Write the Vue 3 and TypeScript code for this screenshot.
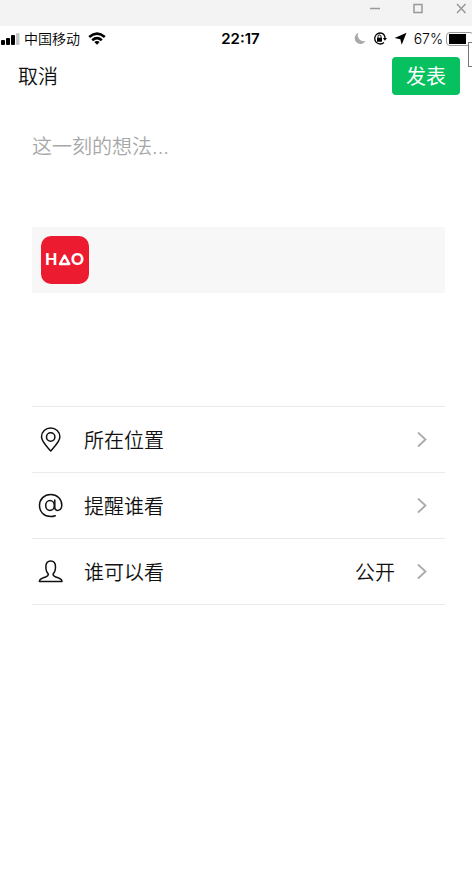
<script setup lang="ts">
import { ref } from 'vue'

interface Option {
  id: 'location' | 'mention' | 'visibility'
  label: string
  value?: string
}

const thought = ref('')
const options: Option[] = [
  { id: 'location', label: '所在位置' },
  { id: 'mention', label: '提醒谁看' },
  { id: 'visibility', label: '谁可以看', value: '公开' },
]
</script>

<template>
  <div class="window">
    <header class="titlebar">
      <button type="button" class="win-btn" aria-label="最小化">
        <svg width="12" height="12" viewBox="0 0 12 12"><path d="M1 6.500h10" /></svg>
      </button>
      <button type="button" class="win-btn" aria-label="最大化">
        <svg width="12" height="12" viewBox="0 0 12 12"><path d="M2 2.500h8v8h-8z" /></svg>
      </button>
      <button type="button" class="win-btn" aria-label="关闭">
        <svg width="12" height="12" viewBox="0 0 12 12"><path d="M2 2l8.500 9M10.500 2l-8.500 9" /></svg>
      </button>
    </header>

    <div class="status">
      <div class="status-left">
        <svg width="20" height="14" viewBox="0 0 20 14">
          <rect x="1" y="8" width="4" height="5" rx="1" />
          <rect x="6" y="6" width="4" height="7" rx="1" />
          <rect x="11" y="3" width="4" height="10" rx="1" />
          <rect x="16" y="1" width="3.500" height="12" rx="1" fill="#c6c6c6" />
        </svg>
        <span class="carrier">中国移动</span>
        <svg class="wifi" width="18" height="14" viewBox="0 0 18 14" fill="none" stroke="#000" stroke-width="2.600">
          <path d="M1.200 4.900Q9-1.800 16.800 4.900M4.200 8.200Q9 4 13.800 8.200" />
          <path d="M6.300 10.100Q9 7.900 11.700 10.100L9 12.700z" fill="#000" stroke="none" />
        </svg>
      </div>
      <time class="clock">22:17</time>
      <div class="status-right">
        <svg width="12" height="14" viewBox="0 0 12 14">
          <path d="M4.300 .8A5.800 5.800 0 1 0 11.600 8.900A6 6 0 0 1 4.300 .8z" fill="#a9a9a9" />
        </svg>
        <svg width="14" height="14" viewBox="0 0 14 14">
          <path d="M11 2.500A5.500 5.500 0 1 0 11 10.500M8.500 1.200A5.500 5.500 0 0 1 12 6.500" fill="none" stroke="#000" stroke-width="1.300" />
          <path d="M9.800 6h4.200l-2.100 2.700z" />
          <rect x="4" y="5.800" width="5" height="4" rx=".5" />
          <path d="M5 6V4.500a1.500 1.500 0 0 1 3 0v1.500" fill="none" stroke="#000" />
        </svg>
        <svg width="13" height="14" viewBox="0 0 13 14">
          <path d="M12.500 .8L7.700 12.800 6.300 7.300.6 6z" />
        </svg>
        <span class="percent">67%</span>
        <span class="battery"><span class="charge"></span></span>
      </div>
      <span class="tip"></span>
    </div>

    <nav class="actions">
      <button type="button" class="cancel">取消</button>
      <button type="button" class="publish">发表</button>
    </nav>

    <main class="compose">
      <textarea v-model="thought" class="thought" placeholder="这一刻的想法..." aria-label="这一刻的想法"></textarea>

      <div class="share">
        <svg class="logo" width="48" height="48" viewBox="0 0 48 48" role="img" aria-label="HAO">
          <rect width="48" height="48" rx="10" fill="#ed1b2f" />
          <text x="4" y="29">H</text>
          <path d="M23.600 19.500L28.200 28H19z" fill="none" stroke="#fff" stroke-width="2.500" stroke-linejoin="round" />
          <text x="30" y="29">O</text>
        </svg>
      </div>

      <ul class="options">
        <li v-for="option in options" :key="option.id">
          <button type="button" class="option">
            <svg class="glyph" width="26" height="26" viewBox="0 0 26 26">
              <template v-if="option.id === 'location'">
                <path d="M12.700 24C10 20.500 3.500 15 3.500 9.800a9.200 8.900 0 0 1 18.400 0C21.900 15 15.400 20.500 12.700 24z" />
                <circle cx="12.700" cy="10" r="4.200" />
              </template>
              <template v-else-if="option.id === 'mention'">
                <ellipse cx="12" cy="12.500" rx="4.300" ry="5" />
                <path d="M16.800 7V14.500C16.800 19 23.800 18.500 23.800 12C23.800 5.800 19 1.500 12.700 1.500C6.200 1.500 1.500 6.200 1.500 12.600S6.200 23.500 12.700 23.500C14.600 23.500 16 23.200 17.300 22.700" />
              </template>
              <template v-else>
                <path d="M10.200 14.800C8.500 13.300 7.900 10.800 7.900 7.800C7.900 4.500 9.700 2 12.700 2S17.500 4.500 17.500 7.800C17.500 10.800 16.900 13.300 15.200 14.800C14.700 16.800 15.700 17.300 17.700 18C21.200 19.200 24 19.400 24 22.600H1.400C1.400 19.400 4.200 19.200 7.700 18C9.700 17.300 10.700 16.800 10.200 14.800z" />
              </template>
            </svg>
            <span class="label">{{ option.label }}</span>
            <span v-if="option.value" class="value">{{ option.value }}</span>
            <svg class="chevron" width="10" height="16" viewBox="0 0 10 16"><path d="M1 .5l7.500 7L1 14.500" /></svg>
          </button>
        </li>
      </ul>
    </main>
  </div>
</template>

<style>
body {
  margin: 0;
  background: #fff;
}
</style>

<style scoped>
.window {
  min-height: 100vh;
  overflow: hidden;
  background: #fff;
  color: #111;
  font-family: Inter, "Noto Sans CJK SC", sans-serif;
  font-weight: 350;
}

button {
  margin: 0;
  padding: 0;
  border: 0;
  background: none;
  color: inherit;
  font: inherit;
}

svg {
  display: block;
  flex: none;
}

.titlebar {
  display: flex;
  justify-content: flex-end;
  align-items: flex-start;
  gap: 31px;
  height: 24px;
  padding: 2px 5px 0 0;
  background: #f3f3f3;
}

.win-btn svg {
  fill: none;
  stroke: #999;
  stroke-width: 1.5;
}

.status {
  position: relative;
  display: grid;
  grid-template-columns: 1fr auto 1fr;
  align-items: center;
  height: 25px;
  color: #000;
  font-size: 14px;
  line-height: 20px;
}

.status-left,
.status-right {
  display: flex;
  align-items: center;
}

.carrier {
  margin-left: 4px;
}

.wifi {
  margin-left: 8px;
}

.clock {
  padding-left: 9px;
  font-size: 15px;
  font-weight: 600;
}

.status-right {
  justify-content: flex-end;
  gap: 7px;
}

.percent {
  margin-right: -4px;
}

.battery {
  flex: none;
  box-sizing: border-box;
  width: 28px;
  height: 14px;
  margin-right: -2px;
  padding: 1px;
  border: 1px solid #999;
  border-radius: 4px;
}

.charge {
  display: block;
  width: 17px;
  height: 10px;
  margin-left: 1px;
  background: #000;
}

.tip {
  position: absolute;
  top: 16px;
  right: -8px;
  width: 10px;
  height: 23px;
  border: 1px solid #777;
  background: #fff;
}

.actions {
  display: flex;
  justify-content: space-between;
  align-items: center;
  height: 50px;
  padding: 0 12px 0 18px;
  font-size: 20px;
  line-height: 30px;
}

.cancel {
  padding-top: 2px;
}

.publish {
  width: 68px;
  height: 38px;
  padding-top: 1px;
  border-radius: 4px;
  background: #07c160;
  color: #fff;
  font-weight: 400;
}

.compose {
  padding: 30px 27px 0 32px;
}

.thought {
  display: block;
  box-sizing: border-box;
  width: 100%;
  height: 96px;
  padding: 1px 0 0;
  border: 0;
  outline: 0;
  resize: none;
  background: none;
  color: #111;
  font: inherit;
  font-size: 20px;
  line-height: 30px;
}

.thought::placeholder {
  color: #a8a8a8;
  opacity: 1;
}

.share {
  padding: 9px;
  background: #f7f7f7;
}

.logo text {
  fill: #fff;
  font-family: Lato, sans-serif;
  font-size: 16px;
  font-weight: 900;
}

.options {
  margin: 113px 0 0;
  padding: 0;
  border-top: 1px solid #ebebeb;
  list-style: none;
}

.options li {
  border-bottom: 1px solid #ebebeb;
}

.option {
  display: flex;
  align-items: center;
  width: 100%;
  height: 65px;
  padding: 0 18px 0 6px;
  font-size: 20px;
  line-height: 30px;
  text-align: left;
}

.glyph {
  margin-right: 20px;
  fill: none;
  stroke: #111;
  stroke-width: 1.5;
  stroke-linejoin: round;
  stroke-linecap: round;
}

.label,
.value {
  padding-top: 2px;
}

.label {
  flex: 1;
}

.value {
  margin-right: 22px;
}

.chevron {
  fill: none;
  stroke: #aaa;
  stroke-width: 1.8;
}
</style>
